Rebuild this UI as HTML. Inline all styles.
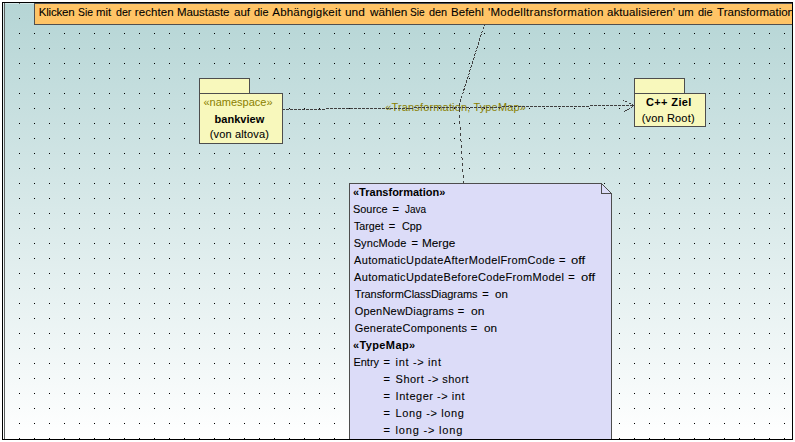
<!DOCTYPE html>
<html><head><meta charset="utf-8">
<style>
html,body{margin:0;padding:0;background:#fff;width:795px;height:442px;overflow:hidden;position:relative}
.t{position:absolute;transform-origin:0 0;-webkit-text-stroke:0.08px currentColor;font-family:"Liberation Sans",sans-serif;line-height:20px;white-space:pre;}
#frameb{position:absolute;left:2px;top:2px;width:791px;height:438px;box-sizing:border-box;border:1px solid #000;}
#frame{position:absolute;left:2px;top:2px;width:791px;height:438px;box-sizing:border-box;border:1px solid #000;overflow:hidden;
 background:linear-gradient(to bottom,#b5d5d5 0%,#ffffff 100%);}
#l0{position:absolute;left:3px;top:3px;width:789px;height:1px;background:rgba(255,255,255,0.4)}
#l1{position:absolute;left:3px;top:3px;width:1px;height:436px;background:rgba(255,255,255,0.45)}
#l2{position:absolute;left:4px;top:3px;width:1px;height:436px;background:#5a5e5e}
svg{position:absolute;left:0;top:0}
#hdr{position:absolute;left:34px;top:3px;width:759px;height:22px;box-sizing:border-box;background:#ffc466;border:1px solid #505050;}
.pk{position:absolute;box-sizing:border-box;background:#f8f8bc;border:1px solid #4d4d4d}
#clip{position:absolute;left:3px;top:3px;width:789px;height:436px;overflow:hidden}
</style></head><body>
<div id="frame"></div>
<svg width="795" height="442" style="shape-rendering:crispEdges">
<defs><pattern id="dots" x="19" y="3" width="15" height="15" patternUnits="userSpaceOnUse"><rect x="0" y="0" width="1" height="1" fill="#000"/></pattern></defs>
<rect x="3" y="3" width="789" height="436" fill="url(#dots)"/>
</svg>
<div id="l0"></div><div id="l1"></div><div id="l2"></div>
<span class="t" style="left:385.30px;top:97px;font-size:11px;font-weight:400;letter-spacing:0.150px;color:#8a8000;-webkit-text-stroke:0">«Transformation, TypeMap»</span>
<svg width="795" height="442">
<g fill="none" stroke="#404040" stroke-width="1" stroke-dasharray="3 1" style="shape-rendering:crispEdges">
<path d="M283 109.5 L633 105.5" stroke-dashoffset="1"/>

</g>
<g fill="#404040" stroke="none" style="shape-rendering:crispEdges"><rect x="623" y="100" width="1" height="1"/><rect x="625" y="101" width="1" height="1"/><rect x="626" y="101" width="1" height="1"/><rect x="629" y="103" width="1" height="1"/><rect x="630" y="103" width="1" height="1"/><rect x="632" y="104" width="1" height="1"/><rect x="633" y="105" width="1" height="1"/><rect x="632" y="106" width="1" height="1"/><rect x="631" y="107" width="1" height="1"/><rect x="629" y="108" width="1" height="1"/><rect x="627" y="109" width="1" height="1"/><rect x="628" y="109" width="1" height="1"/><rect x="625" y="110" width="1" height="1"/><rect x="626" y="110" width="1" height="1"/><rect x="624" y="111" width="1" height="1"/></g>
<g fill="none" stroke="#404040" stroke-width="1" style="shape-rendering:crispEdges">
<path d="M459.2 110 L463.5 183" stroke-dasharray="3 3" stroke-dashoffset="1"/>
<path d="M459.2 110 L459.5 104 L484.2 25" stroke-dasharray="3 1"/>
</g>
</svg>
<div class="pk" style="left:199px;top:78px;width:51px;height:16px"></div>
<div class="pk" style="left:199px;top:93px;width:84px;height:51px"></div>
<div class="pk" style="left:634px;top:78px;width:51px;height:16px"></div>
<div class="pk" style="left:634px;top:93px;width:72px;height:34px"></div>
<svg width="795" height="442" style="shape-rendering:crispEdges">
<path d="M349.5 439 L349.5 183.5 L601.5 183.5 L611.5 193.5 L611.5 439 Z" fill="#dcdcf8" stroke="#4d4d4d" stroke-width="1"/>
<path d="M601.5 183.5 L601.5 193.5 L611.5 193.5" fill="none" stroke="#4d4d4d" stroke-width="1"/>
</svg>
<div id="hdr"></div>
<div id="clip">
<div style="position:absolute;left:-3px;top:-3px;width:795px;height:442px">
<span class="t" style="left:38.80px;top:2px;font-size:11.5px;font-weight:400;letter-spacing:-0.217px;color:#000000">Klicken</span>
<span class="t" style="left:77.90px;top:2px;font-size:11.5px;font-weight:400;letter-spacing:0.000px;color:#000000;transform:scaleX(0.900)">Sie</span>
<span class="t" style="left:96.01px;top:2px;font-size:11.5px;font-weight:400;letter-spacing:0.000px;color:#000000;transform:scaleX(0.987)">mit</span>
<span class="t" style="left:115.90px;top:2px;font-size:11.5px;font-weight:400;letter-spacing:0.000px;color:#000000;transform:scaleX(0.924)">der</span>
<span class="t" style="left:134.80px;top:2px;font-size:11.5px;font-weight:400;letter-spacing:0.067px;color:#000000">rechten</span>
<span class="t" style="left:176.90px;top:2px;font-size:11.5px;font-weight:400;letter-spacing:-0.062px;color:#000000">Maustaste</span>
<span class="t" style="left:233.50px;top:2px;font-size:11.5px;font-weight:400;letter-spacing:0.000px;color:#000000;transform:scaleX(1.006)">auf</span>
<span class="t" style="left:254.30px;top:2px;font-size:11.5px;font-weight:400;letter-spacing:0.000px;color:#000000;transform:scaleX(0.947)">die</span>
<span class="t" style="left:272.30px;top:2px;font-size:11.5px;font-weight:400;letter-spacing:0.191px;color:#000000">Abhängigkeit</span>
<span class="t" style="left:345.17px;top:2px;font-size:11.5px;font-weight:400;letter-spacing:0.000px;color:#000000;transform:scaleX(1.033)">und</span>
<span class="t" style="left:369.50px;top:2px;font-size:11.5px;font-weight:400;letter-spacing:0.000px;color:#000000;transform:scaleX(1.022)">wählen</span>
<span class="t" style="left:410.12px;top:2px;font-size:11.5px;font-weight:400;letter-spacing:0.000px;color:#000000;transform:scaleX(0.880)">Sie</span>
<span class="t" style="left:429.20px;top:2px;font-size:11.5px;font-weight:400;letter-spacing:0.000px;color:#000000;transform:scaleX(0.947)">den</span>
<span class="t" style="left:451.10px;top:2px;font-size:11.5px;font-weight:400;letter-spacing:0.000px;color:#000000">Befehl</span>
<span class="t" style="left:487.90px;top:2px;font-size:11.5px;font-weight:400;letter-spacing:0.295px;color:#000000">'Modelltransformation</span>
<span class="t" style="left:606.90px;top:2px;font-size:11.5px;font-weight:400;letter-spacing:0.108px;color:#000000">aktualisieren'</span>
<span class="t" style="left:677.72px;top:2px;font-size:11.5px;font-weight:400;letter-spacing:0.000px;color:#000000;transform:scaleX(0.980)">um</span>
<span class="t" style="left:697.90px;top:2px;font-size:11.5px;font-weight:400;letter-spacing:0.000px;color:#000000;transform:scaleX(0.953)">die</span>
<span class="t" style="left:717.10px;top:2px;font-size:11.5px;font-weight:400;letter-spacing:0.000px;color:#000000">Transformation</span>
<span class="t" style="left:203.50px;top:92px;font-size:11px;font-weight:400;letter-spacing:-0.010px;color:#8a8000;-webkit-text-stroke:0">«namespace»</span>
<span class="t" style="left:214.60px;top:109px;font-size:11px;font-weight:700;letter-spacing:0.014px;color:#000000;-webkit-text-stroke:0">bankview</span>
<span class="t" style="left:209.70px;top:124px;font-size:11px;font-weight:400;letter-spacing:0.155px;color:#000000">(von altova)</span>
<span class="t" style="left:646.00px;top:92px;font-size:11px;font-weight:700;letter-spacing:0.371px;color:#000000;-webkit-text-stroke:0">C++ Ziel</span>
<span class="t" style="left:641.70px;top:108px;font-size:11px;font-weight:400;letter-spacing:0.167px;color:#000000">(von Root)</span>
<span class="t" style="left:353.00px;top:182px;font-size:11px;font-weight:700;letter-spacing:0.000px;color:#000000;-webkit-text-stroke:0">«Transformation»</span>
<span class="t" style="left:353.31px;top:199px;font-size:11px;font-weight:400;letter-spacing:0.000px;color:#000000;transform:scaleX(0.991)">Source</span>
<span class="t" style="left:392.50px;top:199px;font-size:11px;font-weight:400;letter-spacing:0.000px;color:#000000">=</span>
<span class="t" style="left:404.90px;top:199px;font-size:11px;font-weight:400;letter-spacing:0.000px;color:#000000;transform:scaleX(0.904)">Java</span>
<span class="t" style="left:354.40px;top:216px;font-size:11px;font-weight:400;letter-spacing:0.000px;color:#000000;transform:scaleX(0.971)">Target</span>
<span class="t" style="left:388.80px;top:216px;font-size:11px;font-weight:400;letter-spacing:0.000px;color:#000000">=</span>
<span class="t" style="left:401.60px;top:216px;font-size:11px;font-weight:400;letter-spacing:0.000px;color:#000000;transform:scaleX(0.980)">Cpp</span>
<span class="t" style="left:353.70px;top:233px;font-size:11px;font-weight:400;letter-spacing:0.100px;color:#000000">SyncMode</span>
<span class="t" style="left:411.40px;top:233px;font-size:11px;font-weight:400;letter-spacing:0.000px;color:#000000">=</span>
<span class="t" style="left:422.43px;top:233px;font-size:11px;font-weight:400;letter-spacing:0.000px;color:#000000;transform:scaleX(1.067)">Merge</span>
<span class="t" style="left:354.00px;top:250px;font-size:11px;font-weight:400;letter-spacing:0.356px;color:#000000">AutomaticUpdateAfterModelFromCode</span>
<span class="t" style="left:559.00px;top:250px;font-size:11px;font-weight:400;letter-spacing:0.000px;color:#000000">=</span>
<span class="t" style="left:571.30px;top:250px;font-size:11px;font-weight:400;letter-spacing:0.000px;color:#000000;transform:scaleX(1.183)">off</span>
<span class="t" style="left:354.00px;top:267px;font-size:11px;font-weight:400;letter-spacing:0.339px;color:#000000">AutomaticUpdateBeforeCodeFromModel</span>
<span class="t" style="left:568.20px;top:267px;font-size:11px;font-weight:400;letter-spacing:0.000px;color:#000000">=</span>
<span class="t" style="left:580.50px;top:267px;font-size:11px;font-weight:400;letter-spacing:0.000px;color:#000000;transform:scaleX(1.183)">off</span>
<span class="t" style="left:354.70px;top:284px;font-size:11px;font-weight:400;letter-spacing:-0.067px;color:#000000">TransformClassDiagrams</span>
<span class="t" style="left:482.30px;top:284px;font-size:11px;font-weight:400;letter-spacing:0.000px;color:#000000">=</span>
<span class="t" style="left:494.60px;top:284px;font-size:11px;font-weight:400;letter-spacing:0.000px;color:#000000;transform:scaleX(1.050)">on</span>
<span class="t" style="left:354.70px;top:301px;font-size:11px;font-weight:400;letter-spacing:0.214px;color:#000000">OpenNewDiagrams</span>
<span class="t" style="left:457.70px;top:301px;font-size:11px;font-weight:400;letter-spacing:0.000px;color:#000000">=</span>
<span class="t" style="left:470.80px;top:301px;font-size:11px;font-weight:400;letter-spacing:0.000px;color:#000000;transform:scaleX(1.092)">on</span>
<span class="t" style="left:354.70px;top:318px;font-size:11px;font-weight:400;letter-spacing:0.241px;color:#000000">GenerateComponents</span>
<span class="t" style="left:470.80px;top:318px;font-size:11px;font-weight:400;letter-spacing:0.000px;color:#000000">=</span>
<span class="t" style="left:483.50px;top:318px;font-size:11px;font-weight:400;letter-spacing:0.000px;color:#000000;transform:scaleX(1.067)">on</span>
<span class="t" style="left:353.00px;top:335px;font-size:11px;font-weight:700;letter-spacing:0.375px;color:#000000;-webkit-text-stroke:0">«TypeMap»</span>
<span class="t" style="left:353.40px;top:352px;font-size:11px;font-weight:400;letter-spacing:0.000px;color:#000000">Entry</span>
<span class="t" style="left:383.60px;top:352px;font-size:11px;font-weight:400;letter-spacing:0.000px;color:#000000">=</span>
<span class="t" style="left:395.60px;top:352px;font-size:11px;font-weight:400;letter-spacing:0.656px;color:#000000">int -&gt; int</span>
<span class="t" style="left:383.60px;top:369px;font-size:11px;font-weight:400;letter-spacing:0.000px;color:#000000">=</span>
<span class="t" style="left:395.60px;top:369px;font-size:11px;font-weight:400;letter-spacing:0.469px;color:#000000">Short -&gt; short</span>
<span class="t" style="left:383.60px;top:386px;font-size:11px;font-weight:400;letter-spacing:0.000px;color:#000000">=</span>
<span class="t" style="left:395.60px;top:386px;font-size:11px;font-weight:400;letter-spacing:0.523px;color:#000000">Integer -&gt; int</span>
<span class="t" style="left:383.60px;top:403px;font-size:11px;font-weight:400;letter-spacing:0.000px;color:#000000">=</span>
<span class="t" style="left:395.60px;top:403px;font-size:11px;font-weight:400;letter-spacing:0.627px;color:#000000">Long -&gt; long</span>
<span class="t" style="left:383.60px;top:420px;font-size:11px;font-weight:400;letter-spacing:0.000px;color:#000000">=</span>
<span class="t" style="left:395.60px;top:420px;font-size:11px;font-weight:400;letter-spacing:0.809px;color:#000000">long -&gt; long</span>
</div>
</div>
<div id="frameb"></div>
</body></html>
